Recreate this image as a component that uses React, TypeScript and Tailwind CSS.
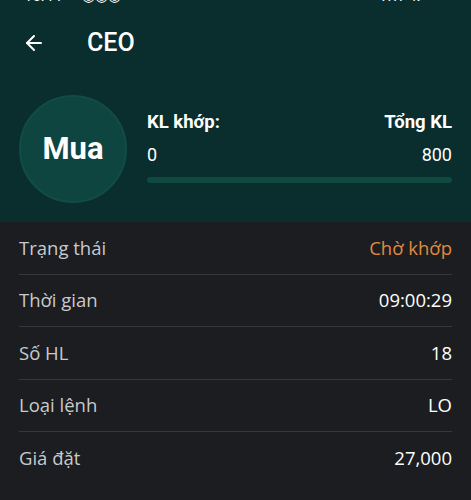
import React from 'react';
import { ArrowLeft } from 'lucide-react';

const rows: { label: string; value: string; accent?: boolean }[] = [
  { label: 'Trạng thái', value: 'Chờ khớp', accent: true },
  { label: 'Thời gian', value: '09:00:29' },
  { label: 'Số HL', value: '18' },
  { label: 'Loại lệnh', value: 'LO' },
  { label: 'Giá đặt', value: '27,000' },
];

export default function App() {
  return (
    <div className="w-[471px] h-[500px] overflow-hidden bg-[#1b1d21]">
      <div className="bg-[#0a2d2d] h-[222px] font-['Roboto',sans-serif] text-white">
        {/* clipped status bar */}
        <div className="h-[4px] overflow-hidden px-[24px]">
          <div className="-mt-[12px] flex items-center justify-between text-[15px] leading-[16px]">
            <span>10:44 ✉ ◉◉◉</span>
            <span className="tracking-[2px]">.ıll ⇅ ▭</span>
          </div>
        </div>

        <div className="flex items-center h-[78px] px-[22px]">
          <ArrowLeft className="w-[24px] h-[24px]" strokeWidth={2} />
          <span className="ml-[41px] text-[25px] font-medium">CEO</span>
        </div>

        <div className="flex items-center pl-[19px] pr-[19px] pt-[13px]">
          <div className="w-[108px] h-[108px] rounded-full bg-[#0e4540] border-2 border-[#114c45] flex items-center justify-center">
            <span className="text-[31px] font-bold">Mua</span>
          </div>
          <div className="flex-1 ml-[20px] -mt-[4px]">
            <div className="flex justify-between text-[18.5px] font-bold leading-[22px]">
              <span>KL khớp:</span>
              <span>Tổng KL</span>
            </div>
            <div className="flex justify-between text-[18px] leading-[20px] mt-[12px]">
              <span>0</span>
              <span>800</span>
            </div>
            <div className="h-[6px] rounded-full bg-[#0f4a40] mt-[12px]" />
          </div>
        </div>
      </div>

      <div className="px-[19px] font-['Open_Sans',sans-serif] text-[18.5px]">
        {rows.map((r, i) => (
          <div
            key={r.label}
            className={`flex items-center justify-between h-[52.5px] ${i < rows.length - 1 ? 'border-b border-[#34373c]' : ''}`}
          >
            <span className="text-[#c9cacc]">{r.label}</span>
            <span className={r.accent ? 'text-[#e08a3c]' : 'text-white'}>{r.value}</span>
          </div>
        ))}
      </div>
    </div>
  );
}
